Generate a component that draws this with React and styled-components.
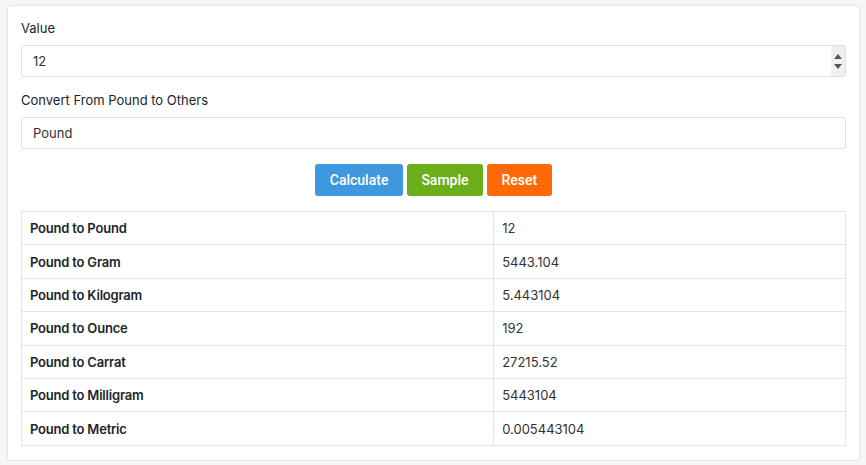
import React from "react";
import styled, { createGlobalStyle } from "styled-components";

const Global = createGlobalStyle`
  html, body { margin: 0; padding: 0; }
  body {
    background: #f5f6f8;
    font-family: Inter, "Noto Sans", sans-serif;
    color: #212529;
  }
  * { box-sizing: border-box; }
`;

const Card = styled.div`
  margin: 5px 0 0 7px;
  width: 853px;
  background: #fff;
  border: 1px solid #e6e8eb;
  border-radius: 4px;
  box-shadow: 0 1px 3px rgba(0, 0, 0, 0.04);
  padding: 12px 13px 14px 13px;
  display: flex;
  flex-direction: column;
`;

const Label = styled.label`
  font-size: 13px;
  line-height: 20px;
  color: #212529;
  margin-bottom: 7px;
  margin-top: ${(p) => p.$top || 0}px;
`;

const Field = styled.div`
  height: 32px;
  border: 1px solid #dcdfe3;
  border-radius: 3px;
  display: flex;
  align-items: stretch;
  background: #fff;
  overflow: hidden;
`;

const Input = styled.input`
  flex: 1;
  border: none;
  outline: none;
  padding: 0 11px;
  font-family: Inter, "Noto Sans", sans-serif;
  font-size: 13px;
  color: #333;
  background: transparent;
`;

const Spinner = styled.div`
  width: 14px;
  background: #efefef;
  display: flex;
  flex-direction: column;
  align-items: center;
  justify-content: space-around;
  padding: 5px 0;
`;

const Tri = styled.div`
  width: 0;
  height: 0;
  border-left: 4px solid transparent;
  border-right: 4px solid transparent;
  ${(p) =>
    p.$down
      ? "border-top: 5px solid #555;"
      : "border-bottom: 5px solid #555;"}
`;

const Buttons = styled.div`
  display: flex;
  justify-content: center;
  gap: 4px;
  margin-top: 15px;
`;

const Button = styled.button`
  height: 32px;
  padding: 0 14.5px;
  border: none;
  border-radius: 3px;
  background: ${(p) => p.$bg};
  color: #fff;
  font-family: Roboto, "Liberation Sans", Arial, sans-serif;
  font-size: 14px;
  font-weight: 500;
`;

const Table = styled.table`
  margin-top: 15px;
  width: 100%;
  border-collapse: collapse;
  font-size: 13px;
`;

const Row = styled.tr`
  height: 33.4px;
`;

const Cell = styled.td`
  border: 1px solid #e3e5e8;
  padding: 0 8px;
  width: 57.3%;
  font-weight: ${(p) => (p.$head ? 600 : 400)};
  letter-spacing: ${(p) => (p.$head ? "-0.2px" : "0")};
  color: ${(p) => (p.$head ? "#212529" : "#333")};
  &:last-child { width: auto; }
`;

const rows = [
  ["Pound to Pound", "12"],
  ["Pound to Gram", "5443.104"],
  ["Pound to Kilogram", "5.443104"],
  ["Pound to Ounce", "192"],
  ["Pound to Carrat", "27215.52"],
  ["Pound to Milligram", "5443104"],
  ["Pound to Metric", "0.005443104"],
];

export default function App() {
  return (
    <>
      <Global />
      <Card>
        <Label>Value</Label>
        <Field>
          <Input defaultValue="12" />
          <Spinner>
            <Tri />
            <Tri $down />
          </Spinner>
        </Field>
        <Label $top={13}>Convert From Pound to Others</Label>
        <Field>
          <Input defaultValue="Pound" />
        </Field>
        <Buttons>
          <Button $bg="#3f97de">Calculate</Button>
          <Button $bg="#6aaf19">Sample</Button>
          <Button $bg="#ff6a07">Reset</Button>
        </Buttons>
        <Table>
          <tbody>
            {rows.map(([a, b]) => (
              <Row key={a}>
                <Cell $head>{a}</Cell>
                <Cell>{b}</Cell>
              </Row>
            ))}
          </tbody>
        </Table>
      </Card>
    </>
  );
}
